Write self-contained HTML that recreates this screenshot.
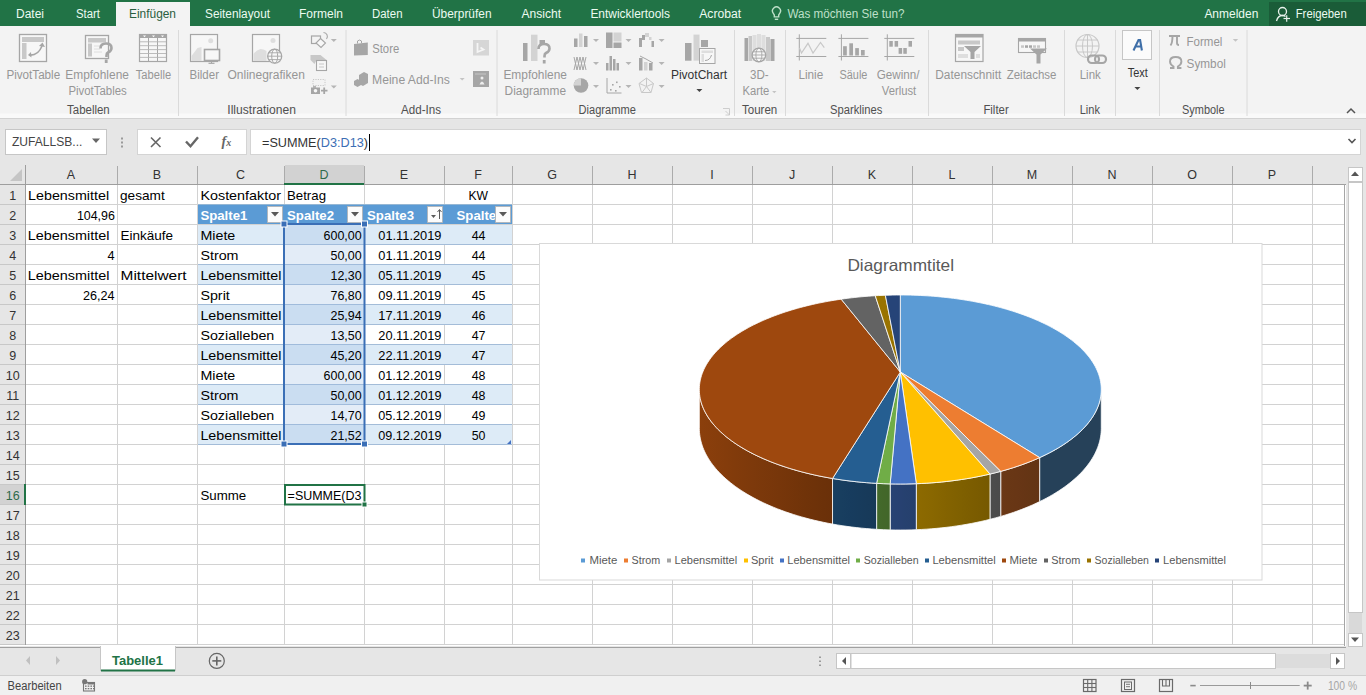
<!DOCTYPE html><html><head><meta charset="utf-8"><style>html,body{margin:0;padding:0;width:1366px;height:695px;overflow:hidden;background:#fff}svg{display:block}text{font-family:"Liberation Sans",sans-serif}</style></head><body><svg width="1366" height="695" viewBox="0 0 1366 695"><rect x="0" y="0" width="1366" height="695" fill="#ffffff"/><rect x="0" y="0" width="1366" height="26" fill="#217346"/><rect x="116" y="2" width="74" height="24" fill="#f3f3f3"/><text x="16.0" y="17.7" font-size="12.5" fill="#ecfbf1" textLength="28.0" lengthAdjust="spacingAndGlyphs">Datei</text><text x="76.0" y="17.7" font-size="12.5" fill="#ecfbf1" textLength="24.0" lengthAdjust="spacingAndGlyphs">Start</text><text x="205.0" y="17.7" font-size="12.5" fill="#ecfbf1" textLength="65.0" lengthAdjust="spacingAndGlyphs">Seitenlayout</text><text x="299.0" y="17.7" font-size="12.5" fill="#ecfbf1" textLength="44.0" lengthAdjust="spacingAndGlyphs">Formeln</text><text x="372.0" y="17.7" font-size="12.5" fill="#ecfbf1" textLength="30.5" lengthAdjust="spacingAndGlyphs">Daten</text><text x="432.0" y="17.7" font-size="12.5" fill="#ecfbf1" textLength="59.5" lengthAdjust="spacingAndGlyphs">Überprüfen</text><text x="521.4" y="17.7" font-size="12.5" fill="#ecfbf1" textLength="39.6" lengthAdjust="spacingAndGlyphs">Ansicht</text><text x="590.4" y="17.7" font-size="12.5" fill="#ecfbf1" textLength="79.6" lengthAdjust="spacingAndGlyphs">Entwicklertools</text><text x="699.2" y="17.7" font-size="12.5" fill="#ecfbf1" textLength="42.0" lengthAdjust="spacingAndGlyphs">Acrobat</text><text x="1204.4" y="17.7" font-size="12.5" fill="#ecfbf1" textLength="53.9" lengthAdjust="spacingAndGlyphs">Anmelden</text><text x="129.0" y="17.7" font-size="12.5" fill="#2a5e40" textLength="47.0" lengthAdjust="spacingAndGlyphs">Einfügen</text><path d="M773.3,13.3 a4,4 0 1 1 6.4,0 l-1,1.6 v2 h-4.4 v-2 z" fill="none" stroke="#bfe0c9" stroke-width="1.4"/><line x1="774.8" y1="19.3" x2="778.2" y2="19.3" stroke="#bfe0c9" stroke-width="1.4"/><text x="787.4" y="17.6" font-size="12.5" fill="#bfe0c9" textLength="117.0" lengthAdjust="spacingAndGlyphs">Was möchten Sie tun?</text><rect x="1269" y="2" width="97" height="24" fill="#1a5c38"/><circle cx="1282.5" cy="11.5" r="4" fill="none" stroke="#e8f2ec" stroke-width="1.3"/><path d="M1276.5,21 q1.5,-5.5 6,-5.5 q2,0 3,1" fill="none" stroke="#e8f2ec" stroke-width="1.3"/><line x1="1283.5" y1="18.5" x2="1290" y2="18.5" stroke="#e8f2ec" stroke-width="1.2"/><line x1="1286.7" y1="15.3" x2="1286.7" y2="21.7" stroke="#e8f2ec" stroke-width="1.2"/><text x="1295.7" y="17.7" font-size="12.5" fill="#ecfbf1" textLength="51.0" lengthAdjust="spacingAndGlyphs">Freigeben</text><rect x="0" y="26" width="1366" height="92" fill="#f3f3f3"/><rect x="0" y="113.5" width="1366" height="4.5" fill="#f9f9f9"/><line x1="0" y1="118.5" x2="1366" y2="118.5" stroke="#d2d2d2" stroke-width="1"/><line x1="178.5" y1="30" x2="178.5" y2="116" stroke="#dadada" stroke-width="1"/><line x1="346" y1="30" x2="346" y2="116" stroke="#dadada" stroke-width="1"/><line x1="497" y1="30" x2="497" y2="116" stroke="#dadada" stroke-width="1"/><line x1="734.5" y1="30" x2="734.5" y2="116" stroke="#dadada" stroke-width="1"/><line x1="785.5" y1="30" x2="785.5" y2="116" stroke="#dadada" stroke-width="1"/><line x1="928.5" y1="30" x2="928.5" y2="116" stroke="#dadada" stroke-width="1"/><line x1="1064.5" y1="30" x2="1064.5" y2="116" stroke="#dadada" stroke-width="1"/><line x1="1115.5" y1="30" x2="1115.5" y2="116" stroke="#dadada" stroke-width="1"/><line x1="1159.5" y1="30" x2="1159.5" y2="116" stroke="#dadada" stroke-width="1"/><line x1="1247" y1="30" x2="1247" y2="116" stroke="#dadada" stroke-width="1"/><text x="6.4" y="78.6" font-size="12" fill="#969696" textLength="53.8" lengthAdjust="spacingAndGlyphs">PivotTable</text><text x="65.3" y="78.6" font-size="12" fill="#969696" textLength="63.6" lengthAdjust="spacingAndGlyphs">Empfohlene</text><text x="68.4" y="94.7" font-size="12" fill="#969696" textLength="58.4" lengthAdjust="spacingAndGlyphs">PivotTables</text><text x="135.8" y="78.6" font-size="12" fill="#969696" textLength="35.3" lengthAdjust="spacingAndGlyphs">Tabelle</text><text x="189.6" y="78.6" font-size="12" fill="#969696" textLength="29.4" lengthAdjust="spacingAndGlyphs">Bilder</text><text x="227.5" y="78.6" font-size="12" fill="#969696" textLength="77.4" lengthAdjust="spacingAndGlyphs">Onlinegrafiken</text><text x="372.2" y="53.0" font-size="12" fill="#969696" textLength="27.0" lengthAdjust="spacingAndGlyphs">Store</text><text x="372.0" y="83.7" font-size="12" fill="#969696" textLength="77.8" lengthAdjust="spacingAndGlyphs">Meine Add-Ins</text><text x="503.4" y="78.6" font-size="12" fill="#969696" textLength="63.6" lengthAdjust="spacingAndGlyphs">Empfohlene</text><text x="504.6" y="94.7" font-size="12" fill="#969696" textLength="61.4" lengthAdjust="spacingAndGlyphs">Diagramme</text><text x="750.0" y="78.6" font-size="12" fill="#969696" textLength="18.6" lengthAdjust="spacingAndGlyphs">3D-</text><text x="742.4" y="94.7" font-size="12" fill="#969696" textLength="26.9" lengthAdjust="spacingAndGlyphs">Karte</text><text x="798.4" y="78.6" font-size="12" fill="#969696" textLength="24.9" lengthAdjust="spacingAndGlyphs">Linie</text><text x="839.5" y="78.6" font-size="12" fill="#969696" textLength="27.9" lengthAdjust="spacingAndGlyphs">Säule</text><text x="876.8" y="78.6" font-size="12" fill="#969696" textLength="42.8" lengthAdjust="spacingAndGlyphs">Gewinn/</text><text x="881.8" y="94.7" font-size="12" fill="#969696" textLength="34.4" lengthAdjust="spacingAndGlyphs">Verlust</text><text x="935.3" y="78.6" font-size="12" fill="#969696" textLength="66.0" lengthAdjust="spacingAndGlyphs">Datenschnitt</text><text x="1006.7" y="78.6" font-size="12" fill="#969696" textLength="49.8" lengthAdjust="spacingAndGlyphs">Zeitachse</text><text x="1079.7" y="78.6" font-size="12" fill="#969696" textLength="21.1" lengthAdjust="spacingAndGlyphs">Link</text><text x="1186.6" y="45.5" font-size="12" fill="#969696" textLength="35.8" lengthAdjust="spacingAndGlyphs">Formel</text><text x="1186.6" y="68.3" font-size="12" fill="#969696" textLength="39.2" lengthAdjust="spacingAndGlyphs">Symbol</text><text x="670.9" y="78.6" font-size="12" fill="#333333" textLength="56.2" lengthAdjust="spacingAndGlyphs">PivotChart</text><text x="1127.7" y="77.3" font-size="12" fill="#333333" textLength="20.1" lengthAdjust="spacingAndGlyphs">Text</text><text x="67.1" y="113.8" font-size="12" fill="#505050" textLength="42.6" lengthAdjust="spacingAndGlyphs">Tabellen</text><text x="227.3" y="113.8" font-size="12" fill="#505050" textLength="68.6" lengthAdjust="spacingAndGlyphs">Illustrationen</text><text x="401.0" y="113.8" font-size="12" fill="#505050" textLength="40.0" lengthAdjust="spacingAndGlyphs">Add-Ins</text><text x="578.6" y="113.8" font-size="12" fill="#505050" textLength="57.2" lengthAdjust="spacingAndGlyphs">Diagramme</text><text x="742.0" y="113.8" font-size="12" fill="#505050" textLength="35.3" lengthAdjust="spacingAndGlyphs">Touren</text><text x="830.0" y="113.8" font-size="12" fill="#505050" textLength="52.3" lengthAdjust="spacingAndGlyphs">Sparklines</text><text x="983.4" y="113.8" font-size="12" fill="#505050" textLength="25.3" lengthAdjust="spacingAndGlyphs">Filter</text><text x="1079.7" y="113.8" font-size="12" fill="#505050" textLength="20.2" lengthAdjust="spacingAndGlyphs">Link</text><text x="1182.0" y="113.8" font-size="12" fill="#505050" textLength="42.6" lengthAdjust="spacingAndGlyphs">Symbole</text><rect x="19.5" y="34.5" width="27" height="27" fill="#f7f7f7" stroke="#a6a6a6" stroke-width="1.3"/><rect x="22" y="37" width="22" height="5" fill="#c8c8c8"/><rect x="22" y="43" width="4.5" height="16" fill="#c8c8c8"/><path d="M29,55 q9,1 13,-9" fill="none" stroke="#a6a6a6" stroke-width="1.6"/><path d="M39,46 l3.5,-3.5 l2.5,4.5 z" fill="#a6a6a6"/><path d="M31,52 l-3,3 l3.5,2.5 z" fill="#a6a6a6"/><rect x="85.5" y="35.5" width="23" height="23" fill="#f7f7f7" stroke="#a6a6a6" stroke-width="1.3"/><rect x="88" y="38" width="18" height="4.5" fill="#c8c8c8"/><rect x="88" y="43.5" width="4" height="13" fill="#c8c8c8"/><path d="M94,46 h8 M94,49 h6 M94,52 h8" stroke="#dedede" stroke-width="1"/><path d="M100.5,48.5 q0,-5 5.5,-5 q5.5,0 5.5,4.5 q0,3 -3.5,4.5 q-1.5,0.8 -1.5,3 v1.5" fill="none" stroke="#a6a6a6" stroke-width="2.6"/><rect x="104.8" y="59.5" width="2.8" height="3.5" fill="#a6a6a6"/><rect x="139.5" y="34.5" width="27" height="27" fill="#f7f7f7" stroke="#a6a6a6" stroke-width="1.2"/><rect x="139.5" y="34.5" width="27" height="3.5" fill="#a6a6a6"/><path d="M143,35.5 h3 l-1.5,1.8 z" fill="#ffffff"/><path d="M152,35.5 h3 l-1.5,1.8 z" fill="#ffffff"/><path d="M161,35.5 h3 l-1.5,1.8 z" fill="#ffffff"/><line x1="148.5" y1="38" x2="148.5" y2="61.5" stroke="#a6a6a6" stroke-width="1"/><line x1="157.5" y1="38" x2="157.5" y2="61.5" stroke="#a6a6a6" stroke-width="1"/><line x1="140" y1="41.8" x2="166" y2="41.8" stroke="#b4b4b4" stroke-width="0.9"/><line x1="140" y1="45.7" x2="166" y2="45.7" stroke="#b4b4b4" stroke-width="0.9"/><line x1="140" y1="49.6" x2="166" y2="49.6" stroke="#b4b4b4" stroke-width="0.9"/><line x1="140" y1="53.5" x2="166" y2="53.5" stroke="#b4b4b4" stroke-width="0.9"/><line x1="140" y1="57.4" x2="166" y2="57.4" stroke="#b4b4b4" stroke-width="0.9"/><rect x="190.5" y="34.5" width="27" height="27" fill="#f7f7f7" stroke="#a6a6a6" stroke-width="1.2"/><circle cx="210.7" cy="40.8" r="2.5" fill="#dedede"/><path d="M191.5,61 v-5 q3,-4 6,-8 l4,-1 v14 z" fill="#dedede"/><rect x="204.5" y="49.5" width="15" height="11" fill="#f7f7f7" stroke="#a6a6a6" stroke-width="1.6"/><path d="M208.5,63.3 h6" stroke="#a6a6a6" stroke-width="1.2"/><path d="M211.5,60.5 v2.5" stroke="#a6a6a6" stroke-width="1"/><rect x="252.5" y="34.5" width="27" height="27" fill="#f7f7f7" stroke="#a6a6a6" stroke-width="1.2"/><circle cx="273" cy="40.5" r="2.5" fill="#dedede"/><path d="M253.5,61 v-7 q3,-4 7,-5 q3,0 6,2 v10 z" fill="#dedede"/><circle cx="274.7" cy="56.2" r="7" fill="#f7f7f7" stroke="#a6a6a6" stroke-width="1.3"/><ellipse cx="274.7" cy="56.2" rx="3" ry="7" fill="none" stroke="#a6a6a6" stroke-width="1"/><path d="M267.7,56.2 h14 M268.5,52.8 h12.4 M268.5,59.6 h12.4" stroke="#a6a6a6" stroke-width="0.9"/><rect x="311.5" y="36" width="9" height="7.5" fill="none" stroke="#a6a6a6" stroke-width="1.2"/><path d="M323.5,32.5 a4,4 0 0 1 3,6.5" fill="none" stroke="#a6a6a6" stroke-width="1.1"/><path d="M320.5,38.5 l5,4.5 l-4.5,4.5 l-5,-4.5 z" fill="#f7f7f7" stroke="#a6a6a6" stroke-width="1.1"/><path d="M330.8,39.0 h6 l-3,3 z" fill="#b5b5b5"/><path d="M310.5,55 h10 l6,5 h-10 l-2,4 l-4,-4 z" fill="#c8c8c8"/><rect x="316.5" y="60.5" width="10" height="10" fill="#f7f7f7" stroke="#a6a6a6" stroke-width="1.1"/><path d="M319,64 h5 M319,67 h5" stroke="#c8c8c8" stroke-width="1"/><rect x="313" y="79.5" width="12" height="6" fill="none" stroke="#c8c8c8" stroke-width="1" stroke-dasharray="1.2,1.2"/><rect x="311" y="87.5" width="9" height="6.5" fill="#a6a6a6"/><circle cx="315.5" cy="90.7" r="1.8" fill="#f7f7f7"/><rect x="313" y="86.2" width="3" height="1.5" fill="#a6a6a6"/><path d="M321,90.7 h6.5 M324.2,87.5 v6.5" stroke="#a6a6a6" stroke-width="1.8"/><path d="M330.8,85.5 h6 l-3,3 z" fill="#b5b5b5"/><path d="M354,44 l13.8,-1.5 v12.5 l-13.8,0.5 z" fill="#a6a6a6"/><path d="M357.5,43.5 v-2.5 q2,-2 4,0 v2" fill="none" stroke="#a6a6a6" stroke-width="1"/><path d="M359,75 l5,-3 l4,2 v9 l-5,3 l-4,-2 z" fill="#a6a6a6"/><path d="M354,81 l3.5,-2 l3.5,2 v4 l-3.5,2 l-3.5,-2 z" fill="#a6a6a6"/><path d="M459.7,78.0 h5.0 l-2.5,2.5 z" fill="#c4c4c4"/><rect x="473" y="40" width="16" height="15.5" fill="#d6d6d6"/><path d="M477.5,43 v9 l6,-2.5 l-3,-2" fill="none" stroke="#f5f5f5" stroke-width="1.8"/><rect x="473" y="71" width="16" height="16" fill="#a6a6a6"/><circle cx="482" cy="78" r="1.5" fill="#eee"/><path d="M479.5,84.5 q2.5,-6 5,0 z" fill="#eee"/><path d="M475,74 h11" stroke="#cfcfcf" stroke-width="0.8"/><rect x="523" y="43" width="4.5" height="18" fill="#a6a6a6"/><rect x="531" y="34.7" width="6.5" height="26.3" fill="#d3d3d3"/><rect x="539.5" y="40" width="5.5" height="5" fill="#a6a6a6"/><path d="M538.5,49 q0,-5 5.5,-5 q5.5,0 5.5,4.5 q0,3 -3.5,4.5 q-1.5,0.8 -1.5,3 v1.5" fill="none" stroke="#a6a6a6" stroke-width="2.6"/><rect x="542.8" y="60" width="2.8" height="3.5" fill="#a6a6a6"/><rect x="574" y="38.5" width="3.5" height="8.5" fill="#a6a6a6"/><rect x="579" y="33.5" width="3.5" height="13.5" fill="#d3d3d3"/><rect x="584" y="36" width="3.5" height="11" fill="#a6a6a6"/><path d="M593,39.0 h6 l-3,3 z" fill="#b5b5b5"/><rect x="606" y="32.5" width="6.5" height="15.5" fill="#a6a6a6"/><rect x="613.5" y="32.5" width="8" height="9" fill="#d3d3d3"/><rect x="613.5" y="42.5" width="8" height="5.5" fill="#a6a6a6"/><path d="M625.5,39.0 h6 l-3,3 z" fill="#b5b5b5"/><rect x="639" y="38" width="3" height="9" fill="#a6a6a6"/><rect x="642" y="35" width="3" height="5" fill="#a6a6a6"/><rect x="645" y="33" width="4" height="4" fill="#d3d3d3"/><rect x="649" y="37" width="2.5" height="3" fill="#d3d3d3"/><rect x="651.5" y="41" width="2.5" height="6" fill="#a6a6a6"/><path d="M658.6,39.0 h6 l-3,3 z" fill="#b5b5b5"/><path d="M574,70 l3,-13 l3,13 l3,-13 l3,13 M574,57 l3,13 l3,-13 l3,13 l3,-13" fill="none" stroke="#a6a6a6" stroke-width="1"/><path d="M593,62.0 h6 l-3,3 z" fill="#b5b5b5"/><rect x="606" y="63" width="2.5" height="7.5" fill="#a6a6a6"/><rect x="609.5" y="56" width="2.5" height="14.5" fill="#a6a6a6"/><rect x="613" y="59" width="2.5" height="11.5" fill="#a6a6a6"/><rect x="616.5" y="63" width="2.5" height="7.5" fill="#a6a6a6"/><path d="M625.5,62.0 h6 l-3,3 z" fill="#b5b5b5"/><rect x="639" y="58" width="3.5" height="12.5" fill="#a6a6a6"/><rect x="644" y="62" width="3.5" height="8.5" fill="#d3d3d3"/><rect x="649" y="63" width="3.5" height="7.5" fill="#a6a6a6"/><path d="M640,56 l6,3 l7,4" stroke="#a6a6a6" stroke-width="1" fill="none"/><path d="M658.6,62.0 h6 l-3,3 z" fill="#b5b5b5"/><circle cx="581" cy="85.5" r="7.3" fill="#a6a6a6"/><path d="M581,85.5 v-7.3 a7.3,7.3 0 0 0 -7.3,7.3 z" fill="#d3d3d3"/><path d="M593,85.0 h6 l-3,3 z" fill="#b5b5b5"/><path d="M607,78 v15 h14.5" fill="none" stroke="#a6a6a6" stroke-width="1"/><rect x="610" y="89" width="1.6" height="1.6" fill="#a6a6a6"/><rect x="612" y="84" width="1.6" height="1.6" fill="#a6a6a6"/><rect x="616" y="81.5" width="1.6" height="1.6" fill="#a6a6a6"/><rect x="619" y="86" width="1.6" height="1.6" fill="#a6a6a6"/><rect x="615" y="90" width="1.6" height="1.6" fill="#a6a6a6"/><path d="M625.5,85.0 h6 l-3,3 z" fill="#b5b5b5"/><path d="M646.5,78 l7,5.5 l-2.5,9 h-9.5 l-2.5,-9 z M646.5,78 v8.5 M653.5,83.5 l-7,3 l-7,-3 M651,92.5 l-4.5,-6 l-4.5,6" fill="none" stroke="#c8c8c8" stroke-width="1"/><path d="M658.6,85.0 h6 l-3,3 z" fill="#b5b5b5"/><rect x="685" y="43" width="6.5" height="17.7" fill="#a6a6a6"/><rect x="693.5" y="34.6" width="6" height="26" fill="#d3d3d3"/><rect x="701" y="40" width="7" height="7" fill="#a6a6a6"/><rect x="699.5" y="48.5" width="15.5" height="15" fill="#f7f7f7" stroke="#a6a6a6" stroke-width="1"/><rect x="701.5" y="50.5" width="11.5" height="2.5" fill="#dedede"/><rect x="701.5" y="54" width="2.5" height="8" fill="#dedede"/><path d="M705,60.5 q5,0 6.5,-5.5" fill="none" stroke="#a6a6a6" stroke-width="1"/><path d="M696.4,89 h6 l-3,3 z" fill="#444"/><rect x="744.5" y="38" width="3.5" height="23" fill="#a6a6a6"/><rect x="748.5" y="36" width="3.5" height="25" fill="#c8c8c8"/><rect x="752.5" y="35" width="4" height="26" fill="#dedede"/><rect x="757" y="34" width="4" height="27" fill="#dedede"/><rect x="761.5" y="35" width="4" height="26" fill="#dedede"/><rect x="766" y="37" width="4" height="24" fill="#c8c8c8"/><rect x="770.5" y="39" width="4" height="22" fill="#a6a6a6"/><circle cx="758.9" cy="55" r="6.8" fill="#f7f7f7" stroke="#a6a6a6" stroke-width="1.3"/><ellipse cx="758.9" cy="55" rx="3" ry="6.8" fill="none" stroke="#a6a6a6" stroke-width="0.9"/><path d="M752.1,55 h13.6 M752.8,51.8 h12.2 M752.8,58.2 h12.2" stroke="#a6a6a6" stroke-width="0.9"/><path d="M772.0999999999999,91.0 h4.4 l-2.2,2.2 z" fill="#c4c4c4"/><path d="M799.3,34.3 v26.2 M796.3,38.4 h30 M796.3,56.5 h30" stroke="#a6a6a6" stroke-width="1"/><path d="M841.4,34.3 v26.2 M838.4,38.4 h30 M838.4,56.5 h30" stroke="#a6a6a6" stroke-width="1"/><path d="M887.3,34.3 v26.2 M884.3,38.4 h30 M884.3,56.5 h30" stroke="#a6a6a6" stroke-width="1"/><path d="M799.5,48 l2,5 l6.5,-9.7 l5,9.7 l7.5,-10.5 l3.8,5.2" fill="none" stroke="#c8c8c8" stroke-width="1.2"/><rect x="843.1" y="46.2" width="3.7" height="9.299999999999997" fill="#a6a6a6"/><rect x="849.3" y="43.3" width="3.7" height="12.200000000000003" fill="#a6a6a6"/><rect x="855.2" y="48.1" width="3.7" height="7.399999999999999" fill="#a6a6a6"/><rect x="861" y="50" width="3.7" height="5.5" fill="#a6a6a6"/><rect x="889.3" y="41" width="3.5" height="5.7" fill="#a6a6a6"/><rect x="894.6" y="41" width="3.5" height="5.7" fill="#a6a6a6"/><rect x="898.6" y="48" width="3.5" height="5.8" fill="#a6a6a6"/><rect x="903.3" y="48" width="3.5" height="5.8" fill="#a6a6a6"/><rect x="908.5" y="41" width="3.5" height="5.7" fill="#a6a6a6"/><rect x="955.5" y="34.5" width="27.5" height="27" fill="#f7f7f7" stroke="#a6a6a6" stroke-width="1.2"/><rect x="955.5" y="34.5" width="27.5" height="3" fill="#a6a6a6"/><rect x="958" y="40.5" width="22" height="4" fill="#c8c8c8"/><rect x="958" y="47" width="6" height="4" fill="#c8c8c8"/><rect x="958" y="54" width="10" height="4" fill="#dedede"/><rect x="976" y="54" width="4" height="4" fill="#dedede"/><path d="M964,46 h17 l-6.5,6 v7 h-4 v-7 z" fill="#a6a6a6"/><rect x="1018.5" y="38.5" width="27" height="14" fill="#f7f7f7" stroke="#a6a6a6" stroke-width="1.1"/><rect x="1018.5" y="38.5" width="27" height="3" fill="#a6a6a6"/><rect x="1021" y="45.3" width="3" height="2.5" fill="#c8c8c8"/><rect x="1025" y="45.3" width="3" height="2.5" fill="#a6a6a6"/><rect x="1029" y="45.3" width="3" height="2.5" fill="#a6a6a6"/><rect x="1033" y="45.3" width="3" height="2.5" fill="#c8c8c8"/><rect x="1037" y="45.3" width="3" height="2.5" fill="#c8c8c8"/><path d="M1030,48.5 h17 l-6.5,6 v9 h-4 v-9 z" fill="#a6a6a6"/><circle cx="1087.5" cy="46" r="11.5" fill="none" stroke="#c8c8c8" stroke-width="1.2"/><ellipse cx="1087.5" cy="46" rx="5" ry="11.5" fill="none" stroke="#c8c8c8" stroke-width="1"/><path d="M1076,46 h23 M1077.5,40 h20 M1077.5,52 h20 M1087.5,34.5 v23" stroke="#c8c8c8" stroke-width="1"/><rect x="1088" y="55.5" width="11" height="7.5" rx="3.7" fill="none" stroke="#a6a6a6" stroke-width="2.2"/><rect x="1095" y="55.5" width="11" height="7.5" rx="3.7" fill="none" stroke="#a6a6a6" stroke-width="2.2"/><rect x="1122.5" y="30.5" width="29" height="29" fill="#fbfbfb" stroke="#c6c6c6" stroke-width="1"/><path d="M1133.5,50.5 l5,-10.5 h1.6 l1.8,10.5 M1135.8,46.5 h5.5" fill="none" stroke="#3f6fa8" stroke-width="2.1"/><path d="M1134.4,87 h6 l-3,3 z" fill="#444"/><path d="M1169,36 h11 M1172.5,36 q0,7 -2,9.5 M1177,36 v7 q0,2 2,2" fill="none" stroke="#a6a6a6" stroke-width="1.9"/><path d="M1232.8,39.0 h5.4 l-2.7,2.7 z" fill="#c4c4c4"/><path d="M1170,68 h3.5 v-1.5 q-3.5,-2 -3.5,-5 q0,-4.5 5.7,-4.5 q5.7,0 5.7,4.5 q0,3 -3.5,5 v1.5 h3.5" fill="none" stroke="#a6a6a6" stroke-width="1.9"/><path d="M1347,113 l4,-4 l4,4" fill="none" stroke="#555" stroke-width="1.5"/><path d="M723,108.5 h6.5 v6.5 M729.5,115 l-4,-4 M725.5,115 h4 v-4" fill="none" stroke="#c8c8c8" stroke-width="0.9"/><rect x="0" y="119" width="1366" height="46" fill="#e6e6e6"/><rect x="5.5" y="129.5" width="101" height="25" fill="#ffffff" stroke="#c6c6c6" stroke-width="1"/><text x="12.0" y="146.2" font-size="12.5" fill="#444" textLength="70.4" lengthAdjust="spacingAndGlyphs">ZUFALLSB...</text><path d="M92,138.5 h8 l-4,4.5 z" fill="#666"/><rect x="121" y="137.5" width="2" height="2" fill="#9a9a9a"/><rect x="121" y="141.5" width="2" height="2" fill="#9a9a9a"/><rect x="121" y="145.5" width="2" height="2" fill="#9a9a9a"/><rect x="137.5" y="129.5" width="109" height="25" fill="#ffffff" stroke="#d4d4d4" stroke-width="1"/><path d="M151,137.5 l9.5,9.5 M160.5,137.5 l-9.5,9.5" fill="none" stroke="#666" stroke-width="1.6"/><path d="M186,141.5 l4.5,4.8 l7.5,-9" fill="none" stroke="#666" stroke-width="2.4"/><text x="221.5" y="146.3" font-size="14" fill="#666" font-weight="bold" font-style="italic" style="font-family:'Liberation Serif',serif">f</text><text x="226.3" y="145.8" font-size="10" fill="#666" font-weight="bold" font-style="italic" style="font-family:'Liberation Serif',serif">x</text><rect x="250.5" y="129.5" width="1110" height="25" fill="#ffffff" stroke="#d4d4d4" stroke-width="1"/><text x="262" y="146.5" font-size="12.5" fill="#333" textLength="106" lengthAdjust="spacingAndGlyphs">=SUMME(<tspan fill="#3c6eb4">D3:D13</tspan>)</text><line x1="369.5" y1="134" x2="369.5" y2="151" stroke="#000" stroke-width="1"/><path d="M1348.5,139 l3.5,3.5 l3.5,-3.5" fill="none" stroke="#555" stroke-width="1.6"/><rect x="0" y="165" width="1346" height="20" fill="#e6e6e6"/><rect x="0" y="185" width="25" height="460" fill="#e6e6e6"/><rect x="285" y="165" width="79" height="19" fill="#d2d2d2"/><rect x="0" y="485" width="25" height="19" fill="#d2d2d2"/><path d="M22,169 L22,181 L10,181 Z" fill="#c5c5c5"/><line x1="25.5" y1="166" x2="25.5" y2="184" stroke="#ababab" stroke-width="1"/><line x1="117.5" y1="166" x2="117.5" y2="184" stroke="#ababab" stroke-width="1"/><line x1="197.5" y1="166" x2="197.5" y2="184" stroke="#ababab" stroke-width="1"/><line x1="284.5" y1="166" x2="284.5" y2="184" stroke="#ababab" stroke-width="1"/><line x1="364.5" y1="166" x2="364.5" y2="184" stroke="#ababab" stroke-width="1"/><line x1="444.5" y1="166" x2="444.5" y2="184" stroke="#ababab" stroke-width="1"/><line x1="512.5" y1="166" x2="512.5" y2="184" stroke="#ababab" stroke-width="1"/><line x1="592.5" y1="166" x2="592.5" y2="184" stroke="#ababab" stroke-width="1"/><line x1="672.5" y1="166" x2="672.5" y2="184" stroke="#ababab" stroke-width="1"/><line x1="752.5" y1="166" x2="752.5" y2="184" stroke="#ababab" stroke-width="1"/><line x1="832.5" y1="166" x2="832.5" y2="184" stroke="#ababab" stroke-width="1"/><line x1="912.5" y1="166" x2="912.5" y2="184" stroke="#ababab" stroke-width="1"/><line x1="992.5" y1="166" x2="992.5" y2="184" stroke="#ababab" stroke-width="1"/><line x1="1072.5" y1="166" x2="1072.5" y2="184" stroke="#ababab" stroke-width="1"/><line x1="1152.5" y1="166" x2="1152.5" y2="184" stroke="#ababab" stroke-width="1"/><line x1="1232.5" y1="166" x2="1232.5" y2="184" stroke="#ababab" stroke-width="1"/><line x1="1312.5" y1="166" x2="1312.5" y2="184" stroke="#ababab" stroke-width="1"/><line x1="0" y1="184.5" x2="1346" y2="184.5" stroke="#9e9e9e" stroke-width="1"/><line x1="25.5" y1="165" x2="25.5" y2="645" stroke="#9e9e9e" stroke-width="1"/><text x="71.0" y="179.1" font-size="12.5" fill="#333" text-anchor="middle">A</text><text x="157.0" y="179.1" font-size="12.5" fill="#333" text-anchor="middle">B</text><text x="240.5" y="179.1" font-size="12.5" fill="#333" text-anchor="middle">C</text><text x="324.0" y="179.1" font-size="12.5" fill="#2f6a4a" text-anchor="middle">D</text><text x="404.0" y="179.1" font-size="12.5" fill="#333" text-anchor="middle">E</text><text x="478.0" y="179.1" font-size="12.5" fill="#333" text-anchor="middle">F</text><text x="552.0" y="179.1" font-size="12.5" fill="#333" text-anchor="middle">G</text><text x="632.0" y="179.1" font-size="12.5" fill="#333" text-anchor="middle">H</text><text x="712.0" y="179.1" font-size="12.5" fill="#333" text-anchor="middle">I</text><text x="792.0" y="179.1" font-size="12.5" fill="#333" text-anchor="middle">J</text><text x="872.0" y="179.1" font-size="12.5" fill="#333" text-anchor="middle">K</text><text x="952.0" y="179.1" font-size="12.5" fill="#333" text-anchor="middle">L</text><text x="1032.0" y="179.1" font-size="12.5" fill="#333" text-anchor="middle">M</text><text x="1112.0" y="179.1" font-size="12.5" fill="#333" text-anchor="middle">N</text><text x="1192.0" y="179.1" font-size="12.5" fill="#333" text-anchor="middle">O</text><text x="1272.0" y="179.1" font-size="12.5" fill="#333" text-anchor="middle">P</text><line x1="26" y1="204.5" x2="1345" y2="204.5" stroke="#d2d2d2" stroke-width="1"/><line x1="26" y1="224.5" x2="1345" y2="224.5" stroke="#d2d2d2" stroke-width="1"/><line x1="26" y1="244.5" x2="1345" y2="244.5" stroke="#d2d2d2" stroke-width="1"/><line x1="26" y1="264.5" x2="1345" y2="264.5" stroke="#d2d2d2" stroke-width="1"/><line x1="26" y1="284.5" x2="1345" y2="284.5" stroke="#d2d2d2" stroke-width="1"/><line x1="26" y1="304.5" x2="1345" y2="304.5" stroke="#d2d2d2" stroke-width="1"/><line x1="26" y1="324.5" x2="1345" y2="324.5" stroke="#d2d2d2" stroke-width="1"/><line x1="26" y1="344.5" x2="1345" y2="344.5" stroke="#d2d2d2" stroke-width="1"/><line x1="26" y1="364.5" x2="1345" y2="364.5" stroke="#d2d2d2" stroke-width="1"/><line x1="26" y1="384.5" x2="1345" y2="384.5" stroke="#d2d2d2" stroke-width="1"/><line x1="26" y1="404.5" x2="1345" y2="404.5" stroke="#d2d2d2" stroke-width="1"/><line x1="26" y1="424.5" x2="1345" y2="424.5" stroke="#d2d2d2" stroke-width="1"/><line x1="26" y1="444.5" x2="1345" y2="444.5" stroke="#d2d2d2" stroke-width="1"/><line x1="26" y1="464.5" x2="1345" y2="464.5" stroke="#d2d2d2" stroke-width="1"/><line x1="26" y1="484.5" x2="1345" y2="484.5" stroke="#d2d2d2" stroke-width="1"/><line x1="26" y1="504.5" x2="1345" y2="504.5" stroke="#d2d2d2" stroke-width="1"/><line x1="26" y1="524.5" x2="1345" y2="524.5" stroke="#d2d2d2" stroke-width="1"/><line x1="26" y1="544.5" x2="1345" y2="544.5" stroke="#d2d2d2" stroke-width="1"/><line x1="26" y1="564.5" x2="1345" y2="564.5" stroke="#d2d2d2" stroke-width="1"/><line x1="26" y1="584.5" x2="1345" y2="584.5" stroke="#d2d2d2" stroke-width="1"/><line x1="26" y1="604.5" x2="1345" y2="604.5" stroke="#d2d2d2" stroke-width="1"/><line x1="26" y1="624.5" x2="1345" y2="624.5" stroke="#d2d2d2" stroke-width="1"/><line x1="26" y1="644.5" x2="1345" y2="644.5" stroke="#d2d2d2" stroke-width="1"/><line x1="117.5" y1="185" x2="117.5" y2="645" stroke="#d2d2d2" stroke-width="1"/><line x1="197.5" y1="185" x2="197.5" y2="645" stroke="#d2d2d2" stroke-width="1"/><line x1="284.5" y1="185" x2="284.5" y2="645" stroke="#d2d2d2" stroke-width="1"/><line x1="364.5" y1="185" x2="364.5" y2="645" stroke="#d2d2d2" stroke-width="1"/><line x1="444.5" y1="185" x2="444.5" y2="645" stroke="#d2d2d2" stroke-width="1"/><line x1="512.5" y1="185" x2="512.5" y2="645" stroke="#d2d2d2" stroke-width="1"/><line x1="592.5" y1="185" x2="592.5" y2="645" stroke="#d2d2d2" stroke-width="1"/><line x1="672.5" y1="185" x2="672.5" y2="645" stroke="#d2d2d2" stroke-width="1"/><line x1="752.5" y1="185" x2="752.5" y2="645" stroke="#d2d2d2" stroke-width="1"/><line x1="832.5" y1="185" x2="832.5" y2="645" stroke="#d2d2d2" stroke-width="1"/><line x1="912.5" y1="185" x2="912.5" y2="645" stroke="#d2d2d2" stroke-width="1"/><line x1="992.5" y1="185" x2="992.5" y2="645" stroke="#d2d2d2" stroke-width="1"/><line x1="1072.5" y1="185" x2="1072.5" y2="645" stroke="#d2d2d2" stroke-width="1"/><line x1="1152.5" y1="185" x2="1152.5" y2="645" stroke="#d2d2d2" stroke-width="1"/><line x1="1232.5" y1="185" x2="1232.5" y2="645" stroke="#d2d2d2" stroke-width="1"/><line x1="1312.5" y1="185" x2="1312.5" y2="645" stroke="#d2d2d2" stroke-width="1"/><line x1="0" y1="204.5" x2="25" y2="204.5" stroke="#c8c8c8" stroke-width="1"/><line x1="0" y1="224.5" x2="25" y2="224.5" stroke="#c8c8c8" stroke-width="1"/><line x1="0" y1="244.5" x2="25" y2="244.5" stroke="#c8c8c8" stroke-width="1"/><line x1="0" y1="264.5" x2="25" y2="264.5" stroke="#c8c8c8" stroke-width="1"/><line x1="0" y1="284.5" x2="25" y2="284.5" stroke="#c8c8c8" stroke-width="1"/><line x1="0" y1="304.5" x2="25" y2="304.5" stroke="#c8c8c8" stroke-width="1"/><line x1="0" y1="324.5" x2="25" y2="324.5" stroke="#c8c8c8" stroke-width="1"/><line x1="0" y1="344.5" x2="25" y2="344.5" stroke="#c8c8c8" stroke-width="1"/><line x1="0" y1="364.5" x2="25" y2="364.5" stroke="#c8c8c8" stroke-width="1"/><line x1="0" y1="384.5" x2="25" y2="384.5" stroke="#c8c8c8" stroke-width="1"/><line x1="0" y1="404.5" x2="25" y2="404.5" stroke="#c8c8c8" stroke-width="1"/><line x1="0" y1="424.5" x2="25" y2="424.5" stroke="#c8c8c8" stroke-width="1"/><line x1="0" y1="444.5" x2="25" y2="444.5" stroke="#c8c8c8" stroke-width="1"/><line x1="0" y1="464.5" x2="25" y2="464.5" stroke="#c8c8c8" stroke-width="1"/><line x1="0" y1="484.5" x2="25" y2="484.5" stroke="#c8c8c8" stroke-width="1"/><line x1="0" y1="504.5" x2="25" y2="504.5" stroke="#c8c8c8" stroke-width="1"/><line x1="0" y1="524.5" x2="25" y2="524.5" stroke="#c8c8c8" stroke-width="1"/><line x1="0" y1="544.5" x2="25" y2="544.5" stroke="#c8c8c8" stroke-width="1"/><line x1="0" y1="564.5" x2="25" y2="564.5" stroke="#c8c8c8" stroke-width="1"/><line x1="0" y1="584.5" x2="25" y2="584.5" stroke="#c8c8c8" stroke-width="1"/><line x1="0" y1="604.5" x2="25" y2="604.5" stroke="#c8c8c8" stroke-width="1"/><line x1="0" y1="624.5" x2="25" y2="624.5" stroke="#c8c8c8" stroke-width="1"/><line x1="0" y1="644.5" x2="25" y2="644.5" stroke="#c8c8c8" stroke-width="1"/><line x1="284" y1="184" x2="364" y2="184" stroke="#217346" stroke-width="2"/><line x1="25" y1="484" x2="25" y2="505" stroke="#217346" stroke-width="2"/><text x="12.8" y="199.8" font-size="12.5" fill="#333" text-anchor="middle">1</text><text x="12.8" y="219.8" font-size="12.5" fill="#333" text-anchor="middle">2</text><text x="12.8" y="239.8" font-size="12.5" fill="#333" text-anchor="middle">3</text><text x="12.8" y="259.8" font-size="12.5" fill="#333" text-anchor="middle">4</text><text x="12.8" y="279.8" font-size="12.5" fill="#333" text-anchor="middle">5</text><text x="12.8" y="299.8" font-size="12.5" fill="#333" text-anchor="middle">6</text><text x="12.8" y="319.8" font-size="12.5" fill="#333" text-anchor="middle">7</text><text x="12.8" y="339.8" font-size="12.5" fill="#333" text-anchor="middle">8</text><text x="12.8" y="359.8" font-size="12.5" fill="#333" text-anchor="middle">9</text><text x="12.8" y="379.8" font-size="12.5" fill="#333" text-anchor="middle">10</text><text x="12.8" y="399.8" font-size="12.5" fill="#333" text-anchor="middle">11</text><text x="12.8" y="419.8" font-size="12.5" fill="#333" text-anchor="middle">12</text><text x="12.8" y="439.8" font-size="12.5" fill="#333" text-anchor="middle">13</text><text x="12.8" y="459.8" font-size="12.5" fill="#333" text-anchor="middle">14</text><text x="12.8" y="479.8" font-size="12.5" fill="#333" text-anchor="middle">15</text><text x="12.8" y="499.8" font-size="12.5" fill="#2f6a4a" text-anchor="middle">16</text><text x="12.8" y="519.8" font-size="12.5" fill="#333" text-anchor="middle">17</text><text x="12.8" y="539.8" font-size="12.5" fill="#333" text-anchor="middle">18</text><text x="12.8" y="559.8" font-size="12.5" fill="#333" text-anchor="middle">19</text><text x="12.8" y="579.8" font-size="12.5" fill="#333" text-anchor="middle">20</text><text x="12.8" y="599.8" font-size="12.5" fill="#333" text-anchor="middle">21</text><text x="12.8" y="619.8" font-size="12.5" fill="#333" text-anchor="middle">22</text><text x="12.8" y="639.8" font-size="12.5" fill="#333" text-anchor="middle">23</text><line x1="1344.5" y1="184" x2="1344.5" y2="647" stroke="#a6a6a6" stroke-width="1"/><rect x="198" y="225" width="314" height="19" fill="#ddebf7"/><line x1="198" y1="244.5" x2="512" y2="244.5" stroke="#a3bcd8" stroke-width="1"/><line x1="198" y1="264.5" x2="512" y2="264.5" stroke="#a3bcd8" stroke-width="1"/><rect x="198" y="265" width="314" height="19" fill="#ddebf7"/><line x1="198" y1="284.5" x2="512" y2="284.5" stroke="#a3bcd8" stroke-width="1"/><line x1="198" y1="304.5" x2="512" y2="304.5" stroke="#a3bcd8" stroke-width="1"/><rect x="198" y="305" width="314" height="19" fill="#ddebf7"/><line x1="198" y1="324.5" x2="512" y2="324.5" stroke="#a3bcd8" stroke-width="1"/><line x1="198" y1="344.5" x2="512" y2="344.5" stroke="#a3bcd8" stroke-width="1"/><rect x="198" y="345" width="314" height="19" fill="#ddebf7"/><line x1="198" y1="364.5" x2="512" y2="364.5" stroke="#a3bcd8" stroke-width="1"/><line x1="198" y1="384.5" x2="512" y2="384.5" stroke="#a3bcd8" stroke-width="1"/><rect x="198" y="385" width="314" height="19" fill="#ddebf7"/><line x1="198" y1="404.5" x2="512" y2="404.5" stroke="#a3bcd8" stroke-width="1"/><line x1="198" y1="424.5" x2="512" y2="424.5" stroke="#a3bcd8" stroke-width="1"/><rect x="198" y="425" width="314" height="19" fill="#ddebf7"/><line x1="198" y1="444.5" x2="512" y2="444.5" stroke="#a3bcd8" stroke-width="1"/><rect x="198" y="204.5" width="314" height="19.5" fill="#5b9bd5"/><rect x="285" y="225" width="79" height="219" fill="#9bbbe3" fill-opacity="0.28"/><text x="28.1" y="199.7" font-size="13.5" fill="#000" textLength="81.0" lengthAdjust="spacingAndGlyphs">Lebensmittel</text><text x="120.0" y="199.7" font-size="13.5" fill="#000" textLength="44.7" lengthAdjust="spacingAndGlyphs">gesamt</text><text x="200.4" y="199.7" font-size="13.5" fill="#000" textLength="80.6" lengthAdjust="spacingAndGlyphs">Kostenfaktor</text><text x="287.0" y="199.7" font-size="13.5" fill="#000" textLength="39.0" lengthAdjust="spacingAndGlyphs">Betrag</text><text x="468.5" y="199.7" font-size="13.5" fill="#000" textLength="19.5" lengthAdjust="spacingAndGlyphs">KW</text><text x="76.9" y="219.7" font-size="13.5" fill="#000" textLength="38.0" lengthAdjust="spacingAndGlyphs">104,96</text><text x="27.7" y="239.7" font-size="13.5" fill="#000" textLength="81.8" lengthAdjust="spacingAndGlyphs">Lebensmittel</text><text x="120.6" y="239.7" font-size="13.5" fill="#000" textLength="52.5" lengthAdjust="spacingAndGlyphs">Einkäufe</text><text x="107.5" y="259.7" font-size="13.5" fill="#000" textLength="7.1" lengthAdjust="spacingAndGlyphs">4</text><text x="27.7" y="279.7" font-size="13.5" fill="#000" textLength="81.8" lengthAdjust="spacingAndGlyphs">Lebensmittel</text><text x="120.6" y="279.7" font-size="13.5" fill="#000" textLength="66.0" lengthAdjust="spacingAndGlyphs">Mittelwert</text><text x="83.0" y="299.7" font-size="13.5" fill="#000" textLength="31.6" lengthAdjust="spacingAndGlyphs">26,24</text><text x="200.4" y="239.7" font-size="13.5" fill="#000" textLength="34.9" lengthAdjust="spacingAndGlyphs">Miete</text><text x="323.6" y="239.7" font-size="13.5" fill="#000" textLength="38.1" lengthAdjust="spacingAndGlyphs">600,00</text><text x="378.3" y="239.7" font-size="13.5" fill="#000" textLength="63.2" lengthAdjust="spacingAndGlyphs">01.11.2019</text><text x="471.7" y="239.7" font-size="13.5" fill="#000" textLength="13.8" lengthAdjust="spacingAndGlyphs">44</text><text x="200.4" y="259.7" font-size="13.5" fill="#000" textLength="38.1" lengthAdjust="spacingAndGlyphs">Strom</text><text x="330.5" y="259.7" font-size="13.5" fill="#000" textLength="31.2" lengthAdjust="spacingAndGlyphs">50,00</text><text x="378.3" y="259.7" font-size="13.5" fill="#000" textLength="63.2" lengthAdjust="spacingAndGlyphs">01.11.2019</text><text x="471.7" y="259.7" font-size="13.5" fill="#000" textLength="13.8" lengthAdjust="spacingAndGlyphs">44</text><text x="200.4" y="279.7" font-size="13.5" fill="#000" textLength="81.0" lengthAdjust="spacingAndGlyphs">Lebensmittel</text><text x="330.5" y="279.7" font-size="13.5" fill="#000" textLength="31.2" lengthAdjust="spacingAndGlyphs">12,30</text><text x="378.3" y="279.7" font-size="13.5" fill="#000" textLength="63.2" lengthAdjust="spacingAndGlyphs">05.11.2019</text><text x="471.7" y="279.7" font-size="13.5" fill="#000" textLength="13.8" lengthAdjust="spacingAndGlyphs">45</text><text x="200.4" y="299.7" font-size="13.5" fill="#000" textLength="29.4" lengthAdjust="spacingAndGlyphs">Sprit</text><text x="330.5" y="299.7" font-size="13.5" fill="#000" textLength="31.2" lengthAdjust="spacingAndGlyphs">76,80</text><text x="378.3" y="299.7" font-size="13.5" fill="#000" textLength="63.2" lengthAdjust="spacingAndGlyphs">09.11.2019</text><text x="471.7" y="299.7" font-size="13.5" fill="#000" textLength="13.8" lengthAdjust="spacingAndGlyphs">45</text><text x="200.4" y="319.7" font-size="13.5" fill="#000" textLength="81.0" lengthAdjust="spacingAndGlyphs">Lebensmittel</text><text x="330.5" y="319.7" font-size="13.5" fill="#000" textLength="31.2" lengthAdjust="spacingAndGlyphs">25,94</text><text x="378.3" y="319.7" font-size="13.5" fill="#000" textLength="63.2" lengthAdjust="spacingAndGlyphs">17.11.2019</text><text x="471.7" y="319.7" font-size="13.5" fill="#000" textLength="13.8" lengthAdjust="spacingAndGlyphs">46</text><text x="200.4" y="339.7" font-size="13.5" fill="#000" textLength="73.9" lengthAdjust="spacingAndGlyphs">Sozialleben</text><text x="330.5" y="339.7" font-size="13.5" fill="#000" textLength="31.2" lengthAdjust="spacingAndGlyphs">13,50</text><text x="378.3" y="339.7" font-size="13.5" fill="#000" textLength="63.2" lengthAdjust="spacingAndGlyphs">20.11.2019</text><text x="471.7" y="339.7" font-size="13.5" fill="#000" textLength="13.8" lengthAdjust="spacingAndGlyphs">47</text><text x="200.4" y="359.7" font-size="13.5" fill="#000" textLength="81.0" lengthAdjust="spacingAndGlyphs">Lebensmittel</text><text x="330.5" y="359.7" font-size="13.5" fill="#000" textLength="31.2" lengthAdjust="spacingAndGlyphs">45,20</text><text x="378.3" y="359.7" font-size="13.5" fill="#000" textLength="63.2" lengthAdjust="spacingAndGlyphs">22.11.2019</text><text x="471.7" y="359.7" font-size="13.5" fill="#000" textLength="13.8" lengthAdjust="spacingAndGlyphs">47</text><text x="200.4" y="379.7" font-size="13.5" fill="#000" textLength="34.9" lengthAdjust="spacingAndGlyphs">Miete</text><text x="323.6" y="379.7" font-size="13.5" fill="#000" textLength="38.1" lengthAdjust="spacingAndGlyphs">600,00</text><text x="378.3" y="379.7" font-size="13.5" fill="#000" textLength="63.2" lengthAdjust="spacingAndGlyphs">01.12.2019</text><text x="471.7" y="379.7" font-size="13.5" fill="#000" textLength="13.8" lengthAdjust="spacingAndGlyphs">48</text><text x="200.4" y="399.7" font-size="13.5" fill="#000" textLength="38.1" lengthAdjust="spacingAndGlyphs">Strom</text><text x="330.5" y="399.7" font-size="13.5" fill="#000" textLength="31.2" lengthAdjust="spacingAndGlyphs">50,00</text><text x="378.3" y="399.7" font-size="13.5" fill="#000" textLength="63.2" lengthAdjust="spacingAndGlyphs">01.12.2019</text><text x="471.7" y="399.7" font-size="13.5" fill="#000" textLength="13.8" lengthAdjust="spacingAndGlyphs">48</text><text x="200.4" y="419.7" font-size="13.5" fill="#000" textLength="73.9" lengthAdjust="spacingAndGlyphs">Sozialleben</text><text x="330.5" y="419.7" font-size="13.5" fill="#000" textLength="31.2" lengthAdjust="spacingAndGlyphs">14,70</text><text x="378.3" y="419.7" font-size="13.5" fill="#000" textLength="63.2" lengthAdjust="spacingAndGlyphs">05.12.2019</text><text x="471.7" y="419.7" font-size="13.5" fill="#000" textLength="13.8" lengthAdjust="spacingAndGlyphs">49</text><text x="200.4" y="439.7" font-size="13.5" fill="#000" textLength="81.0" lengthAdjust="spacingAndGlyphs">Lebensmittel</text><text x="330.5" y="439.7" font-size="13.5" fill="#000" textLength="31.2" lengthAdjust="spacingAndGlyphs">21,52</text><text x="378.3" y="439.7" font-size="13.5" fill="#000" textLength="63.2" lengthAdjust="spacingAndGlyphs">09.12.2019</text><text x="471.7" y="439.7" font-size="13.5" fill="#000" textLength="13.8" lengthAdjust="spacingAndGlyphs">50</text><text x="200.4" y="219.5" font-size="13.5" fill="#ffffff" font-weight="bold" textLength="47.0" lengthAdjust="spacingAndGlyphs">Spalte1</text><text x="287.0" y="219.5" font-size="13.5" fill="#ffffff" font-weight="bold" textLength="47.0" lengthAdjust="spacingAndGlyphs">Spalte2</text><text x="367.0" y="219.5" font-size="13.5" fill="#ffffff" font-weight="bold" textLength="47.0" lengthAdjust="spacingAndGlyphs">Spalte3</text><svg x="444" y="205" width="51" height="19"><text x="12.5" y="14.5" font-size="13.5" fill="#ffffff" font-weight="bold" textLength="47" lengthAdjust="spacingAndGlyphs">Spalte4</text></svg><rect x="267.5" y="206.5" width="15" height="16" fill="#fcfcfc" stroke="#b2b2b2" stroke-width="0.8"/><rect x="347.5" y="206.5" width="15" height="16" fill="#fcfcfc" stroke="#b2b2b2" stroke-width="0.8"/><rect x="427.5" y="206.5" width="15" height="16" fill="#fcfcfc" stroke="#b2b2b2" stroke-width="0.8"/><rect x="495.5" y="206.5" width="15" height="16" fill="#fcfcfc" stroke="#b2b2b2" stroke-width="0.8"/><path d="M271.0,212 h8 l-4,4.5 z" fill="#595959"/><path d="M351.0,212 h8 l-4,4.5 z" fill="#595959"/><path d="M499.0,212 h8 l-4,4.5 z" fill="#595959"/><path d="M431,215 h5 l-2.5,3 z" fill="#595959"/><line x1="439.5" y1="210" x2="439.5" y2="219" stroke="#595959" stroke-width="1"/><path d="M437.5,212 l2,-2.5 l2,2.5" fill="none" stroke="#595959" stroke-width="1"/><path d="M511,440 v4 h-4 z" fill="#4472c4"/><rect x="284" y="224" width="80.5" height="220" fill="none" stroke="#3b6fb6" stroke-width="2"/><rect x="281" y="221" width="6" height="6" fill="#3b6fb6" stroke="#ffffff" stroke-width="1"/><rect x="361.5" y="221" width="6" height="6" fill="#3b6fb6" stroke="#ffffff" stroke-width="1"/><rect x="281" y="441" width="6" height="6" fill="#3b6fb6" stroke="#ffffff" stroke-width="1"/><rect x="361.5" y="441" width="6" height="6" fill="#3b6fb6" stroke="#ffffff" stroke-width="1"/><text x="200.4" y="499.7" font-size="13.5" fill="#000" textLength="45.8" lengthAdjust="spacingAndGlyphs">Summe</text><svg x="284" y="485" width="81" height="20"><text x="3.6" y="14.6" font-size="13.5" fill="#000" textLength="73.8" lengthAdjust="spacingAndGlyphs">=SUMME(D3</text><text x="79" y="14.6" font-size="13.5" fill="#000">:</text></svg><rect x="285" y="485" width="79.5" height="19.5" fill="none" stroke="#217346" stroke-width="2"/><rect x="362" y="502" width="5" height="5" fill="#217346" stroke="#ffffff" stroke-width="1"/><rect x="539.5" y="243.5" width="722.5" height="336.5" fill="#ffffff" stroke="#d9d9d9" stroke-width="1"/><text x="847.4" y="271" font-size="16.5" fill="#595959" textLength="106.6" lengthAdjust="spacingAndGlyphs" font-family="Liberation Sans">Diagrammtitel</text><linearGradient id="sg0" gradientUnits="userSpaceOnUse" x1="1101.28" y1="0" x2="1039.64" y2="0"><stop offset="0.000" stop-color="#264159"/><stop offset="0.200" stop-color="#264159"/><stop offset="0.400" stop-color="#264159"/><stop offset="0.600" stop-color="#264159"/><stop offset="0.800" stop-color="#264159"/><stop offset="1.000" stop-color="#264159"/></linearGradient><path d="M1101.28,389.50 L1101.23,391.48 L1101.10,393.47 L1100.88,395.46 L1100.56,397.46 L1100.16,399.46 L1099.66,401.46 L1099.07,403.47 L1098.38,405.48 L1097.60,407.49 L1096.73,409.49 L1095.76,411.50 L1094.69,413.50 L1093.52,415.50 L1092.26,417.49 L1090.90,419.48 L1089.44,421.46 L1087.88,423.43 L1086.22,425.39 L1084.46,427.34 L1082.60,429.28 L1080.65,431.21 L1078.59,433.12 L1076.44,435.01 L1074.18,436.89 L1071.83,438.75 L1069.38,440.59 L1066.83,442.40 L1064.19,444.20 L1061.45,445.97 L1058.61,447.72 L1055.68,449.44 L1052.66,451.13 L1049.54,452.80 L1046.33,454.43 L1043.03,456.03 L1039.64,457.60 L1039.64,501.62 L1043.03,499.93 L1046.33,498.20 L1049.54,496.44 L1052.66,494.65 L1055.68,492.83 L1058.61,490.98 L1061.45,489.10 L1064.19,487.19 L1066.83,485.26 L1069.38,483.31 L1071.83,481.33 L1074.18,479.33 L1076.44,477.31 L1078.59,475.27 L1080.65,473.21 L1082.60,471.14 L1084.46,469.06 L1086.22,466.96 L1087.88,464.85 L1089.44,462.72 L1090.90,460.59 L1092.26,458.46 L1093.52,456.31 L1094.69,454.16 L1095.76,452.00 L1096.73,449.85 L1097.60,447.69 L1098.38,445.52 L1099.07,443.36 L1099.66,441.20 L1100.16,439.05 L1100.56,436.89 L1100.88,434.74 L1101.10,432.60 L1101.23,430.46 L1101.28,428.33Z" fill="url(#sg0)" stroke="#ffffff" stroke-width="0.8" stroke-linejoin="round"/><linearGradient id="sg1" gradientUnits="userSpaceOnUse" x1="1039.64" y1="0" x2="1000.71" y2="0"><stop offset="0.000" stop-color="#633414"/><stop offset="0.200" stop-color="#643514"/><stop offset="0.400" stop-color="#663515"/><stop offset="0.600" stop-color="#683615"/><stop offset="0.800" stop-color="#693715"/><stop offset="1.000" stop-color="#6b3816"/></linearGradient><path d="M1039.64,457.60 L1036.12,459.16 L1032.52,460.67 L1028.82,462.15 L1025.04,463.60 L1021.18,465.00 L1017.24,466.36 L1013.22,467.68 L1009.12,468.95 L1004.95,470.18 L1000.71,471.36 L1000.71,516.43 L1004.95,515.15 L1009.12,513.83 L1013.22,512.46 L1017.24,511.04 L1021.18,509.58 L1025.04,508.07 L1028.82,506.52 L1032.52,504.92 L1036.12,503.29 L1039.64,501.62Z" fill="url(#sg1)" stroke="#ffffff" stroke-width="0.8" stroke-linejoin="round"/><linearGradient id="sg2" gradientUnits="userSpaceOnUse" x1="1000.71" y1="0" x2="989.98" y2="0"><stop offset="0.000" stop-color="#4a4a4a"/><stop offset="0.200" stop-color="#4b4b4b"/><stop offset="0.400" stop-color="#4b4b4b"/><stop offset="0.600" stop-color="#4c4c4c"/><stop offset="0.800" stop-color="#4c4c4c"/><stop offset="1.000" stop-color="#4c4c4c"/></linearGradient><path d="M1000.71,471.36 L995.39,472.76 L989.98,474.07 L989.98,519.34 L995.39,517.92 L1000.71,516.43Z" fill="url(#sg2)" stroke="#ffffff" stroke-width="0.8" stroke-linejoin="round"/><linearGradient id="sg3" gradientUnits="userSpaceOnUse" x1="989.98" y1="0" x2="916.30" y2="0"><stop offset="0.000" stop-color="#765900"/><stop offset="0.200" stop-color="#7b5c00"/><stop offset="0.400" stop-color="#7f6000"/><stop offset="0.600" stop-color="#846300"/><stop offset="0.800" stop-color="#896700"/><stop offset="1.000" stop-color="#8d6a00"/></linearGradient><path d="M989.98,474.07 L985.40,475.11 L980.76,476.10 L976.06,477.03 L971.31,477.91 L966.50,478.73 L961.64,479.49 L956.74,480.20 L951.79,480.85 L946.81,481.44 L941.79,481.97 L936.74,482.44 L931.66,482.85 L926.56,483.19 L921.44,483.48 L916.30,483.70 L916.30,529.70 L921.44,529.46 L926.56,529.15 L931.66,528.78 L936.74,528.34 L941.79,527.84 L946.81,527.27 L951.79,526.63 L956.74,525.93 L961.64,525.17 L966.50,524.35 L971.31,523.47 L976.06,522.52 L980.76,521.52 L985.40,520.46 L989.98,519.34Z" fill="url(#sg3)" stroke="#ffffff" stroke-width="0.8" stroke-linejoin="round"/><linearGradient id="sg4" gradientUnits="userSpaceOnUse" x1="916.30" y1="0" x2="890.16" y2="0"><stop offset="0.000" stop-color="#253f6d"/><stop offset="0.200" stop-color="#26406e"/><stop offset="0.400" stop-color="#26416f"/><stop offset="0.600" stop-color="#274171"/><stop offset="0.800" stop-color="#274272"/><stop offset="1.000" stop-color="#284374"/></linearGradient><path d="M916.30,483.70 L911.08,483.87 L905.85,483.97 L900.62,484.00 L895.39,483.97 L890.16,483.88 L890.16,529.90 L895.39,530.00 L900.62,530.03 L905.85,529.99 L911.08,529.88 L916.30,529.70Z" fill="url(#sg4)" stroke="#ffffff" stroke-width="0.8" stroke-linejoin="round"/><linearGradient id="sg5" gradientUnits="userSpaceOnUse" x1="890.16" y1="0" x2="876.60" y2="0"><stop offset="0.000" stop-color="#42662a"/><stop offset="0.200" stop-color="#42672a"/><stop offset="0.400" stop-color="#43672a"/><stop offset="0.600" stop-color="#43682a"/><stop offset="0.800" stop-color="#43692b"/><stop offset="1.000" stop-color="#44692b"/></linearGradient><path d="M890.16,483.88 L883.37,483.67 L876.60,483.34 L876.60,529.32 L883.37,529.66 L890.16,529.90Z" fill="url(#sg5)" stroke="#ffffff" stroke-width="0.8" stroke-linejoin="round"/><linearGradient id="sg6" gradientUnits="userSpaceOnUse" x1="876.60" y1="0" x2="832.52" y2="0"><stop offset="0.000" stop-color="#163958"/><stop offset="0.200" stop-color="#173a5a"/><stop offset="0.400" stop-color="#173b5c"/><stop offset="0.600" stop-color="#173c5e"/><stop offset="0.800" stop-color="#183e5f"/><stop offset="1.000" stop-color="#183f61"/></linearGradient><path d="M876.60,483.34 L871.59,483.03 L866.59,482.66 L861.62,482.24 L856.68,481.75 L851.77,481.21 L846.89,480.61 L842.06,479.95 L837.26,479.23 L832.52,478.47 L832.52,524.07 L837.26,524.90 L842.06,525.66 L846.89,526.37 L851.77,527.02 L856.68,527.60 L861.62,528.13 L866.59,528.59 L871.59,528.98 L876.60,529.32Z" fill="url(#sg6)" stroke="#ffffff" stroke-width="0.8" stroke-linejoin="round"/><linearGradient id="sg7" gradientUnits="userSpaceOnUse" x1="832.52" y1="0" x2="699.32" y2="0"><stop offset="0.000" stop-color="#6a3009"/><stop offset="0.200" stop-color="#703309"/><stop offset="0.400" stop-color="#77360a"/><stop offset="0.600" stop-color="#7d390b"/><stop offset="0.800" stop-color="#843c0b"/><stop offset="1.000" stop-color="#8b3f0c"/></linearGradient><path d="M832.52,478.47 L827.94,477.67 L823.41,476.81 L818.94,475.91 L814.52,474.96 L810.16,473.96 L805.85,472.92 L801.61,471.83 L797.44,470.69 L793.33,469.50 L789.29,468.28 L785.32,467.01 L781.43,465.70 L777.61,464.35 L773.87,462.96 L770.21,461.54 L766.64,460.07 L763.14,458.58 L759.73,457.04 L756.41,455.48 L753.17,453.88 L750.03,452.25 L746.97,450.60 L744.00,448.91 L741.13,447.20 L738.35,445.46 L735.66,443.70 L733.07,441.92 L730.58,440.11 L728.17,438.29 L725.87,436.44 L723.66,434.58 L721.55,432.70 L719.54,430.81 L717.62,428.90 L715.80,426.98 L714.08,425.04 L712.45,423.10 L710.93,421.15 L709.49,419.18 L708.16,417.22 L706.92,415.24 L705.78,413.26 L704.73,411.28 L703.78,409.29 L702.92,407.31 L702.16,405.32 L701.49,403.33 L700.91,401.34 L700.42,399.36 L700.02,397.38 L699.72,395.40 L699.50,393.43 L699.37,391.46 L699.32,389.50 L699.32,428.33 L699.37,430.44 L699.50,432.56 L699.72,434.68 L700.02,436.81 L700.42,438.94 L700.91,441.08 L701.49,443.21 L702.16,445.35 L702.92,447.49 L703.78,449.63 L704.73,451.77 L705.78,453.90 L706.92,456.03 L708.16,458.16 L709.49,460.27 L710.93,462.39 L712.45,464.49 L714.08,466.58 L715.80,468.66 L717.62,470.73 L719.54,472.78 L721.55,474.82 L723.66,476.84 L725.87,478.85 L728.17,480.83 L730.58,482.80 L733.07,484.74 L735.66,486.66 L738.35,488.55 L741.13,490.42 L744.00,492.26 L746.97,494.08 L750.03,495.86 L753.17,497.61 L756.41,499.33 L759.73,501.01 L763.14,502.66 L766.64,504.28 L770.21,505.85 L773.87,507.39 L777.61,508.88 L781.43,510.33 L785.32,511.74 L789.29,513.11 L793.33,514.42 L797.44,515.70 L801.61,516.92 L805.85,518.10 L810.16,519.22 L814.52,520.30 L818.94,521.32 L823.41,522.29 L827.94,523.21 L832.52,524.07Z" fill="url(#sg7)" stroke="#ffffff" stroke-width="0.8" stroke-linejoin="round"/><path d="M900.30,372.00 L900.30,295.00 L903.66,295.01 L907.01,295.05 L910.36,295.12 L913.71,295.21 L917.06,295.33 L920.41,295.47 L923.75,295.65 L927.08,295.84 L930.41,296.07 L933.73,296.32 L937.05,296.59 L940.35,296.90 L943.65,297.23 L946.94,297.58 L950.22,297.96 L953.49,298.37 L956.74,298.80 L959.99,299.26 L963.22,299.75 L966.43,300.26 L969.63,300.80 L972.82,301.37 L975.99,301.96 L979.14,302.57 L982.27,303.22 L985.39,303.89 L988.48,304.58 L991.55,305.30 L994.61,306.05 L997.64,306.82 L1000.64,307.62 L1003.63,308.45 L1006.59,309.30 L1009.52,310.17 L1012.42,311.07 L1015.30,312.00 L1018.15,312.95 L1020.97,313.93 L1023.76,314.93 L1026.52,315.96 L1029.25,317.02 L1031.94,318.09 L1034.60,319.20 L1037.22,320.33 L1039.81,321.48 L1042.36,322.65 L1044.87,323.86 L1047.35,325.08 L1049.78,326.33 L1052.17,327.61 L1054.52,328.90 L1056.82,330.22 L1059.08,331.57 L1061.30,332.94 L1063.47,334.33 L1065.59,335.74 L1067.66,337.18 L1069.68,338.63 L1071.65,340.11 L1073.56,341.62 L1075.43,343.14 L1077.24,344.68 L1078.99,346.25 L1080.69,347.83 L1082.32,349.44 L1083.90,351.07 L1085.42,352.71 L1086.88,354.38 L1088.27,356.06 L1089.60,357.76 L1090.87,359.48 L1092.06,361.22 L1093.19,362.97 L1094.25,364.74 L1095.25,366.53 L1096.17,368.33 L1097.01,370.14 L1097.79,371.97 L1098.49,373.82 L1099.11,375.67 L1099.66,377.54 L1100.13,379.43 L1100.52,381.32 L1100.83,383.22 L1101.06,385.13 L1101.21,387.06 L1101.27,388.99 L1101.25,390.92 L1101.15,392.87 L1100.96,394.82 L1100.68,396.78 L1100.31,398.74 L1099.86,400.70 L1099.32,402.66 L1098.68,404.63 L1097.96,406.60 L1097.14,408.57 L1096.24,410.53 L1095.23,412.50 L1094.14,414.46 L1092.95,416.42 L1091.67,418.37 L1090.30,420.31 L1088.82,422.25 L1087.26,424.18 L1085.60,426.10 L1083.84,428.00 L1081.99,429.90 L1080.04,431.78 L1078.00,433.65 L1075.86,435.50 L1073.63,437.34 L1071.30,439.15 L1068.88,440.95 L1066.37,442.73 L1063.76,444.48 L1061.06,446.22 L1058.27,447.93 L1055.38,449.61 L1052.41,451.27 L1049.35,452.89 L1046.20,454.49 L1042.97,456.06 L1039.64,457.60Z" fill="#5b9bd5" stroke="#ffffff" stroke-width="0.8" stroke-linejoin="round"/><path d="M900.30,372.00 L1039.64,457.60 L1036.12,459.16 L1032.52,460.67 L1028.82,462.15 L1025.04,463.60 L1021.18,465.00 L1017.24,466.36 L1013.22,467.68 L1009.12,468.95 L1004.95,470.18 L1000.71,471.36Z" fill="#ed7d31" stroke="#ffffff" stroke-width="0.8" stroke-linejoin="round"/><path d="M900.30,372.00 L1000.71,471.36 L995.39,472.76 L989.98,474.07Z" fill="#a5a5a5" stroke="#ffffff" stroke-width="0.8" stroke-linejoin="round"/><path d="M900.30,372.00 L989.98,474.07 L985.40,475.11 L980.76,476.10 L976.06,477.03 L971.31,477.91 L966.50,478.73 L961.64,479.49 L956.74,480.20 L951.79,480.85 L946.81,481.44 L941.79,481.97 L936.74,482.44 L931.66,482.85 L926.56,483.19 L921.44,483.48 L916.30,483.70Z" fill="#ffc000" stroke="#ffffff" stroke-width="0.8" stroke-linejoin="round"/><path d="M900.30,372.00 L916.30,483.70 L911.08,483.87 L905.85,483.97 L900.62,484.00 L895.39,483.97 L890.16,483.88Z" fill="#4472c4" stroke="#ffffff" stroke-width="0.8" stroke-linejoin="round"/><path d="M900.30,372.00 L890.16,483.88 L883.37,483.67 L876.60,483.34Z" fill="#70ad47" stroke="#ffffff" stroke-width="0.8" stroke-linejoin="round"/><path d="M900.30,372.00 L876.60,483.34 L871.59,483.03 L866.59,482.66 L861.62,482.24 L856.68,481.75 L851.77,481.21 L846.89,480.61 L842.06,479.95 L837.26,479.23 L832.52,478.47Z" fill="#255e91" stroke="#ffffff" stroke-width="0.8" stroke-linejoin="round"/><path d="M900.30,372.00 L832.52,478.47 L827.99,477.67 L823.50,476.83 L819.07,475.94 L814.70,475.00 L810.37,474.02 L806.11,472.98 L801.91,471.90 L797.77,470.78 L793.70,469.61 L789.69,468.40 L785.76,467.15 L781.90,465.86 L778.11,464.53 L774.40,463.16 L770.77,461.76 L767.21,460.31 L763.74,458.84 L760.35,457.32 L757.04,455.78 L753.82,454.21 L750.69,452.60 L747.64,450.97 L744.69,449.31 L741.82,447.62 L739.05,445.90 L736.36,444.17 L733.77,442.41 L731.27,440.63 L728.87,438.83 L726.56,437.00 L724.34,435.17 L722.22,433.31 L720.20,431.44 L718.27,429.56 L716.43,427.66 L714.70,425.75 L713.05,423.83 L711.50,421.90 L710.05,419.96 L708.69,418.01 L707.42,416.06 L706.25,414.10 L705.18,412.14 L704.19,410.18 L703.30,408.21 L702.50,406.24 L701.79,404.28 L701.18,402.31 L700.65,400.34 L700.21,398.38 L699.86,396.42 L699.60,394.47 L699.43,392.52 L699.34,390.57 L699.33,388.64 L699.41,386.71 L699.57,384.79 L699.82,382.88 L700.14,380.97 L700.55,379.08 L701.03,377.20 L701.59,375.34 L702.23,373.48 L702.95,371.64 L703.73,369.81 L704.59,368.00 L705.53,366.20 L706.53,364.42 L707.61,362.65 L708.75,360.90 L709.96,359.17 L711.23,357.45 L712.58,355.75 L713.98,354.07 L715.45,352.41 L716.98,350.77 L718.57,349.15 L720.22,347.55 L721.92,345.96 L723.69,344.40 L725.51,342.86 L727.38,341.34 L729.31,339.84 L731.29,338.37 L733.32,336.91 L735.40,335.48 L737.52,334.07 L739.70,332.69 L741.92,331.32 L744.19,329.98 L746.51,328.67 L748.86,327.37 L751.26,326.10 L753.70,324.86 L756.18,323.64 L758.70,322.44 L761.26,321.27 L763.85,320.12 L766.48,319.00 L769.15,317.90 L771.84,316.82 L774.58,315.77 L777.34,314.75 L780.14,313.75 L782.96,312.78 L785.82,311.83 L788.70,310.91 L791.61,310.01 L794.55,309.14 L797.51,308.30 L800.50,307.48 L803.51,306.68 L806.54,305.91 L809.60,305.17 L812.68,304.45 L815.78,303.76 L818.90,303.10 L822.03,302.46 L825.19,301.85 L828.36,301.26 L831.55,300.70 L834.75,300.17 L837.97,299.66 L841.20,299.18Z" fill="#9e480e" stroke="#ffffff" stroke-width="0.8" stroke-linejoin="round"/><path d="M900.30,372.00 L841.20,299.18 L844.55,298.71 L847.92,298.27 L851.30,297.85 L854.69,297.47 L858.09,297.11 L861.51,296.78 L864.93,296.48 L868.36,296.20 L871.79,295.96 L875.24,295.74Z" fill="#636363" stroke="#ffffff" stroke-width="0.8" stroke-linejoin="round"/><path d="M900.30,372.00 L875.24,295.74 L878.62,295.55 L882.00,295.39 L885.39,295.26Z" fill="#997300" stroke="#ffffff" stroke-width="0.8" stroke-linejoin="round"/><path d="M900.30,372.00 L885.39,295.26 L889.11,295.15 L892.84,295.07 L896.57,295.02 L900.30,295.00Z" fill="#264478" stroke="#ffffff" stroke-width="0.8" stroke-linejoin="round"/><rect x="581" y="558.5" width="4" height="4" fill="#5b9bd5"/><text x="589.4" y="564.0" font-size="10" fill="#595959" textLength="27.9" lengthAdjust="spacingAndGlyphs">Miete</text><rect x="624" y="558.5" width="4" height="4" fill="#ed7d31"/><text x="631.5" y="564.0" font-size="10" fill="#595959" textLength="28.6" lengthAdjust="spacingAndGlyphs">Strom</text><rect x="667" y="558.5" width="4" height="4" fill="#a5a5a5"/><text x="674.5" y="564.0" font-size="10" fill="#595959" textLength="62.7" lengthAdjust="spacingAndGlyphs">Lebensmittel</text><rect x="744" y="558.5" width="4" height="4" fill="#ffc000"/><text x="750.9" y="564.0" font-size="10" fill="#595959" textLength="22.7" lengthAdjust="spacingAndGlyphs">Sprit</text><rect x="780" y="558.5" width="4" height="4" fill="#4472c4"/><text x="787.3" y="564.0" font-size="10" fill="#595959" textLength="62.7" lengthAdjust="spacingAndGlyphs">Lebensmittel</text><rect x="856" y="558.5" width="4" height="4" fill="#70ad47"/><text x="863.7" y="564.0" font-size="10" fill="#595959" textLength="55.0" lengthAdjust="spacingAndGlyphs">Sozialleben</text><rect x="925" y="558.5" width="4" height="4" fill="#255e91"/><text x="932.4" y="564.0" font-size="10" fill="#595959" textLength="63.4" lengthAdjust="spacingAndGlyphs">Lebensmittel</text><rect x="1002" y="558.5" width="4" height="4" fill="#9e480e"/><text x="1009.5" y="564.0" font-size="10" fill="#595959" textLength="27.9" lengthAdjust="spacingAndGlyphs">Miete</text><rect x="1044" y="558.5" width="4" height="4" fill="#636363"/><text x="1051.3" y="564.0" font-size="10" fill="#595959" textLength="29.1" lengthAdjust="spacingAndGlyphs">Strom</text><rect x="1087" y="558.5" width="4" height="4" fill="#997300"/><text x="1094.6" y="564.0" font-size="10" fill="#595959" textLength="54.3" lengthAdjust="spacingAndGlyphs">Sozialleben</text><rect x="1155" y="558.5" width="4" height="4" fill="#264478"/><text x="1163.1" y="564.0" font-size="10" fill="#595959" textLength="62.9" lengthAdjust="spacingAndGlyphs">Lebensmittel</text><rect x="0" y="646" width="1366" height="29" fill="#e6e6e6"/><line x1="0" y1="647.5" x2="1346" y2="647.5" stroke="#a0a0a0" stroke-width="1"/><line x1="0" y1="675.5" x2="1366" y2="675.5" stroke="#cfcfcf" stroke-width="1"/><rect x="100.5" y="646" width="75" height="25" fill="#ffffff"/><line x1="100.5" y1="646" x2="100.5" y2="671" stroke="#c6c6c6" stroke-width="1"/><line x1="175.5" y1="646" x2="175.5" y2="671" stroke="#c6c6c6" stroke-width="1"/><line x1="101" y1="670.5" x2="175" y2="670.5" stroke="#217346" stroke-width="2"/><text x="112.0" y="664.6" font-size="13.5" fill="#217346" font-weight="bold" textLength="51.0" lengthAdjust="spacingAndGlyphs">Tabelle1</text><path d="M30,656 l-4,4.5 l4,4.5 z" fill="#c0c0c0"/><path d="M56,656 l4,4.5 l-4,4.5 z" fill="#c0c0c0"/><circle cx="216.8" cy="660.9" r="7.5" fill="none" stroke="#666" stroke-width="1.2"/><line x1="212.3" y1="660.9" x2="221.3" y2="660.9" stroke="#666" stroke-width="1.6"/><line x1="216.8" y1="656.4" x2="216.8" y2="665.4" stroke="#666" stroke-width="1.6"/><rect x="819" y="656.5" width="2" height="1.5" fill="#9a9a9a"/><rect x="819" y="660.5" width="2" height="1.5" fill="#9a9a9a"/><rect x="819" y="664.5" width="2" height="1.5" fill="#9a9a9a"/><rect x="836.5" y="653.5" width="14" height="15" fill="#ffffff" stroke="#c6c6c6" stroke-width="1"/><path d="M846,657 l-4,4 l4,4 z" fill="#555"/><rect x="851" y="653.5" width="424.5" height="15" fill="#ffffff" stroke="#c6c6c6" stroke-width="1"/><rect x="1276" y="654" width="54" height="14" fill="#dcdcdc"/><rect x="1330.5" y="653.5" width="14" height="15" fill="#ffffff" stroke="#c6c6c6" stroke-width="1"/><path d="M1336,657 l4,4 l-4,4 z" fill="#555"/><rect x="1346" y="165" width="20" height="481" fill="#e6e6e6"/><rect x="1348.5" y="167.5" width="14" height="14" fill="#ffffff" stroke="#c6c6c6" stroke-width="1"/><path d="M1351,176 h8 l-4,-4.5 z" fill="#555"/><rect x="1348.5" y="182.5" width="14" height="430" fill="#ffffff" stroke="#c6c6c6" stroke-width="1"/><rect x="1349" y="613" width="13" height="20" fill="#d9d9d9"/><rect x="1348.5" y="633.5" width="14" height="13" fill="#ffffff" stroke="#c6c6c6" stroke-width="1"/><path d="M1351,637.5 h8 l-4,4.5 z" fill="#555"/><rect x="0" y="676" width="1366" height="19" fill="#f0f0f0"/><text x="7.6" y="689.8" font-size="12.5" fill="#444" textLength="54.0" lengthAdjust="spacingAndGlyphs">Bearbeiten</text><circle cx="84.7" cy="681.7" r="2.6" fill="#777"/><rect x="83.5" y="682.5" width="11" height="8.5" fill="none" stroke="#777" stroke-width="1.1"/><rect x="87.5" y="682" width="7" height="2.5" fill="#777"/><rect x="85" y="685.5" width="1.6" height="1.3" fill="#777"/><rect x="87.7" y="685.5" width="1.6" height="1.3" fill="#777"/><rect x="90.4" y="685.5" width="1.6" height="1.3" fill="#777"/><rect x="93" y="685.5" width="1.6" height="1.3" fill="#777"/><rect x="85" y="688" width="1.6" height="1.3" fill="#777"/><rect x="87.7" y="688" width="1.6" height="1.3" fill="#777"/><rect x="90.4" y="688" width="1.6" height="1.3" fill="#777"/><rect x="93" y="688" width="1.6" height="1.3" fill="#777"/><rect x="1083.5" y="679.5" width="12.5" height="12" fill="none" stroke="#6a6a6a" stroke-width="1.2"/><line x1="1087.7" y1="679.5" x2="1087.7" y2="691.5" stroke="#6a6a6a" stroke-width="1.1"/><line x1="1091.9" y1="679.5" x2="1091.9" y2="691.5" stroke="#6a6a6a" stroke-width="1.1"/><line x1="1083.5" y1="683.5" x2="1096" y2="683.5" stroke="#6a6a6a" stroke-width="1.1"/><line x1="1083.5" y1="687.5" x2="1096" y2="687.5" stroke="#6a6a6a" stroke-width="1.1"/><rect x="1121.5" y="679.5" width="13" height="12" fill="none" stroke="#6a6a6a" stroke-width="1.2"/><rect x="1124.5" y="682" width="7" height="7.5" fill="none" stroke="#6a6a6a" stroke-width="1"/><line x1="1126" y1="684.3" x2="1130" y2="684.3" stroke="#6a6a6a" stroke-width="0.9"/><line x1="1126" y1="686.7" x2="1130" y2="686.7" stroke="#6a6a6a" stroke-width="0.9"/><rect x="1159.5" y="679.5" width="13" height="12" fill="none" stroke="#6a6a6a" stroke-width="1.2"/><path d="M1162.5,679.5 v6.5 h7 v-6.5 M1166,679.5 v6.5" fill="none" stroke="#6a6a6a" stroke-width="1.1"/><line x1="1190.3" y1="685.6" x2="1195.7" y2="685.6" stroke="#8a8a8a" stroke-width="1.6"/><line x1="1200" y1="685.5" x2="1299.7" y2="685.5" stroke="#9a9a9a" stroke-width="1"/><line x1="1250.5" y1="682" x2="1250.5" y2="689" stroke="#8a8a8a" stroke-width="1"/><line x1="1303.7" y1="685.6" x2="1311.7" y2="685.6" stroke="#8a8a8a" stroke-width="1.8"/><line x1="1307.7" y1="681.6" x2="1307.7" y2="689.6" stroke="#8a8a8a" stroke-width="1.8"/><text x="1327.9" y="690.0" font-size="12" fill="#a6a6a6" textLength="29.2" lengthAdjust="spacingAndGlyphs">100 %</text></svg></body></html>
